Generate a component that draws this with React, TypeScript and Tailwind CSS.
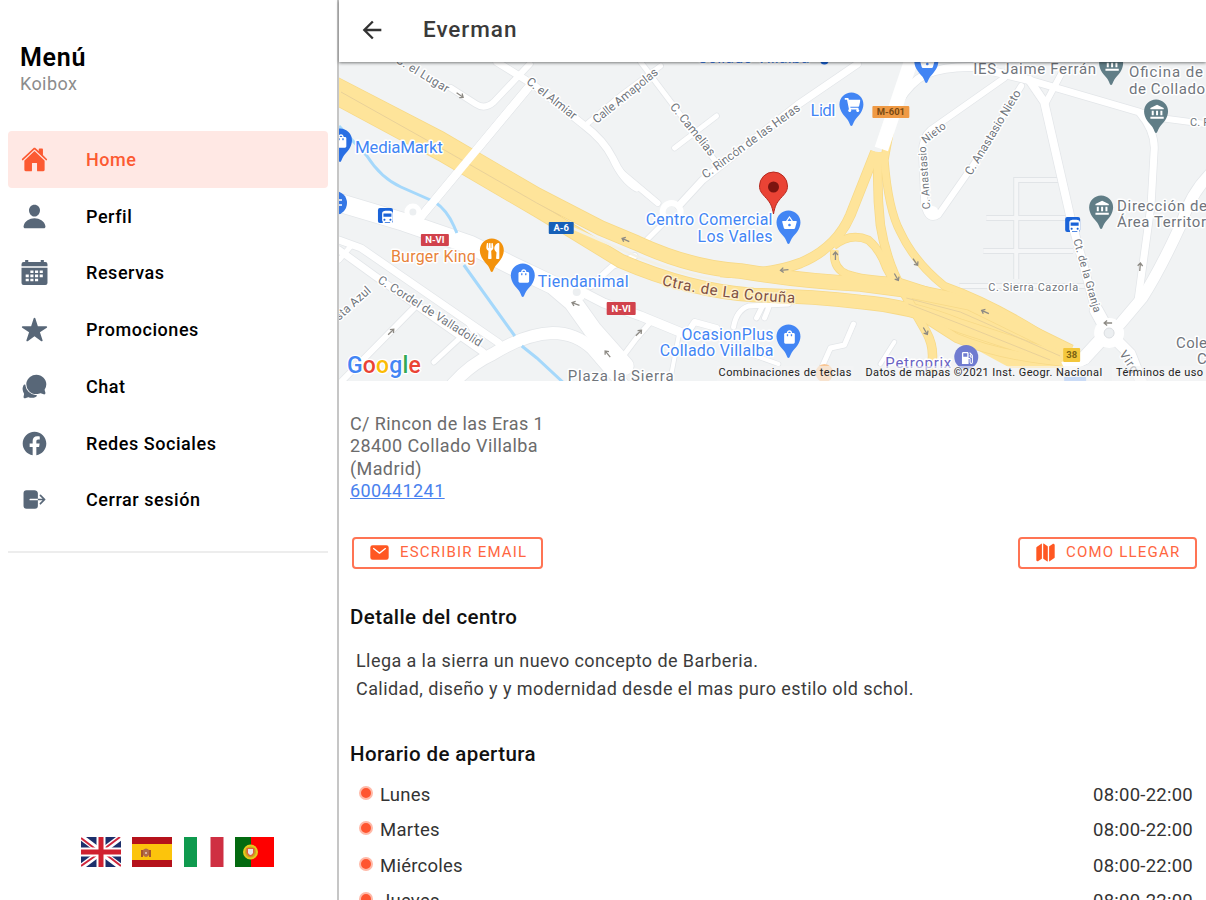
import type { ReactNode } from "react";
import type { IconType } from "react-icons";
import { FaShoppingCart, FaUtensils } from "react-icons/fa";
import {
  IoChatbubbles,
  IoHome,
  IoLogOut,
  IoLogoFacebook,
  IoMail,
  IoMap,
  IoPerson,
  IoStar,
} from "react-icons/io5";
import {
  MdAccountBalance,
  MdArrowBack,
  MdDirectionsBus,
  MdLocalGasStation,
  MdShoppingBag,
  MdShoppingBasket,
} from "react-icons/md";

function CalendarIcon({ className }: { className?: string }) {
  return (
    <svg viewBox="0 0 26 26" className={className} fill="currentColor">
      <path d="M4 1h3v2h12V1h3v2h1.500a2 2 0 0 1 2 2v2H.5V5a2 2 0 0 1 2-2H4z" />
      <path
        fillRule="evenodd"
        d="M.5 8.500h25V23a2 2 0 0 1-2 2h-21a2 2 0 0 1-2-2zM9 11v2.500h3V11zm4.500 0v2.500h3V11zm4.500 0v2.500h3V11zM4.500 15v2.500h3V15zM9 15v2.500h3V15zm4.500 0v2.500h3V15zm4.500 0v2.500h3V15zM4.500 19v2.500h3V19zM9 19v2.500h3V19zm4.500 0v2.500h3V19z"
      />
    </svg>
  );
}

const menu = [
  { label: "Home", icon: IoHome, active: true },
  { label: "Perfil", icon: IoPerson },
  { label: "Reservas", icon: CalendarIcon },
  { label: "Promociones", icon: IoStar },
  { label: "Chat", icon: IoChatbubbles },
  { label: "Redes Sociales", icon: IoLogoFacebook },
  { label: "Cerrar sesión", icon: IoLogOut },
];

const hours = [
  { day: "Lunes", time: "08:00-22:00" },
  { day: "Martes", time: "08:00-22:00" },
  { day: "Miércoles", time: "08:00-22:00" },
  { day: "Jueves", time: "08:00-22:00" },
];

function Flags() {
  return (
    <div className="flex gap-[11.300px] pl-[81px]">
      <svg viewBox="0 0 40 30" className="h-[30px] w-10">
        <path fill="#1c2f6b" d="M0 0h40v30H0z" />
        <path stroke="#fff" strokeWidth="6" d="M0 0l40 30M40 0L0 30" />
        <path stroke="#d0263c" strokeWidth="2" d="M0 1l17 13M40 29L23 16M39 0L23 12M0 29l17-12" />
        <path stroke="#fff" strokeWidth="9" d="M20 0v30M0 15h40" />
        <path stroke="#d0202f" strokeWidth="5" d="M20 0v30M0 15h40" />
      </svg>
      <svg viewBox="0 0 40 30" className="h-[30px] w-10">
        <path fill="#b5121b" d="M0 0h40v30H0z" />
        <path fill="#fcc40c" d="M0 7h40v16H0z" />
        <path fill="#a8552b" d="M9 13h2v7H9zM17 13h2v7h-2z" />
        <path fill="#b06a4a" d="M11 13q3-3 6 0v5q-3 4-6 0z" />
        <path fill="#d9b5a0" d="M13 15h2v2h-2z" />
      </svg>
      <svg viewBox="0 0 40 30" className="h-[30px] w-10">
        <path fill="#fff" d="M0 0h40v30H0z" />
        <path fill="#0f9a4e" d="M0 0h13v30H0z" />
        <path fill="#cf2f42" d="M26.500 0H39.500v30H26.500z" />
      </svg>
      <svg viewBox="0 0 40 30" className="h-[30px] w-10">
        <path fill="#fe0000" d="M0 0h39v30H0z" />
        <path fill="#046a10" d="M0 0h16v30H0z" />
        <circle cx="15.500" cy="15" r="6.500" fill="#c9a81c" stroke="#e6c81c" strokeWidth="2" />
        <path fill="#e0603a" d="M11.500 11h8v5q-4 7-8 0z" />
        <path fill="#e9e6ea" d="M13 12h5v4q-2.500 4-5 0z" />
      </svg>
    </div>
  );
}

function Sidebar() {
  return (
    <aside className="flex h-full w-[339px] shrink-0 flex-col border-r-[2.500px] border-[#c6c6c6] bg-white">
      <div className="h-[131px] pl-[20px] pt-[43px]">
        <h1 className="text-[25px] font-semibold leading-[30px] tracking-[0.7px] text-black">Menú</h1>
        <p className="text-[18px] leading-[22px] tracking-[0.4px] text-[#8c8c8c]">Koibox</p>
      </div>
      <nav className="ml-2 mr-[9px] h-[422px] border-b-2 border-[#ededed]">
        {menu.map(({ label, icon: Icon, active }) => (
          <div
            key={label}
            className={
              active
                ? "flex h-[56.750px] items-center rounded-[4px] bg-[#ffe8e4] text-[#fc5a32]"
                : "flex h-[56.750px] items-center text-black"
            }
          >
            <Icon
              className={
                active ? "ml-[13px] h-[27px] w-[27px]" : "ml-[13px] h-[27px] w-[27px] text-[#586778]"
              }
            />
            <span className="ml-[38px] text-[18px] font-medium tracking-[0.55px]">{label}</span>
          </div>
        ))}
      </nav>
      <div className="mt-auto pb-[33px]">
        <Flags />
      </div>
    </aside>
  );
}

type LabelProps = {
  x: number;
  y: number;
  w: number;
  r?: number;
  size?: number;
  fill?: string;
  halo?: number;
  children: ReactNode;
};

function Label({ x, y, w, r = 0, size = 12, fill = "#70757c", halo = 3, children }: LabelProps) {
  return (
    <text
      transform={`translate(${x} ${y}) rotate(${r})`}
      textLength={w}
      fontSize={size}
      fill={fill}
      stroke="#fff"
      strokeWidth={halo}
      strokeLinejoin="round"
      paintOrder="stroke"
    >
      {children}
    </text>
  );
}

// x / y is the tip of the pin
function Pin({ x, y, fill, icon: Icon }: { x: number; y: number; fill: string; icon: IconType }) {
  return (
    <g transform={`translate(${x} ${y})`}>
      <path
        fill={fill}
        d="M0 0C-1.500 0-1.500-3-4-6.500-7-10-12-15-12-21.500a12 12 0 0 1 24 0C12-15 7-10 4-6.500 1.500-3 1.500 0 0 0z"
      />
      <Icon x={-7} y={-29} width={14} height={14} color="#fff" />
    </g>
  );
}

type ShieldProps = {
  x: number;
  y: number;
  w: number;
  h: number;
  fill: string;
  color?: string;
  children: ReactNode;
};

function Shield({ x, y, w, h, fill, color = "#fff", children }: ShieldProps) {
  return (
    <g>
      <rect x={x} y={y} width={w} height={h} rx="1" fill={fill} />
      <text x={x + w / 2} y={y + h / 2 + 3.5} textAnchor="middle" fontSize="9.500" fontWeight="700" fill={color}>
        {children}
      </text>
    </g>
  );
}

function BusStop({ x, y }: { x: number; y: number }) {
  return (
    <g>
      <rect x={x} y={y} width="15" height="15" rx="2" fill="#1a63d8" />
      <MdDirectionsBus x={x + 1.5} y={y + 1.5} width={12} height={12} color="#fff" />
    </g>
  );
}

const streets = [
  { w: 8, d: "M528 87L419 218" },
  { w: 6, d: "M450 88L475 104Q484 110 493 102L529 64" },
  { w: 7, d: "M496 62L533 85L583 125Q603 140 612 158Q622 180 636 188" },
  { w: 6, d: "M620 172L657 203" },
  { w: 5, d: "M585 125L622 94L660 66" },
  { w: 5, d: "M640 62L714 160" },
  { w: 5, d: "M674 148L716 116" },
  { w: 7, d: "M678 206L702 180L797 105L857 64" },
  { w: 8, d: "M898 102Q910 82 926 74Q945 66 975 67L1029 80" },
  { w: 6, d: "M1004 78L930 130Q920 138 922 160L924 205Q928 222 938 215L973 165L1021 86" },
  { w: 8, d: "M1029 80L1044 102L1070 216L1096 312" },
  { w: 7, d: "M1029 80L1139 112Q1156 132 1154 152L1151 205L1138 300" },
  { w: 6, d: "M1061 74L1046 102" },
  { w: 6, d: "M1139 112L1160 118L1206 124" },
  { w: 11, d: "M1210 174Q1190 195 1182 222Q1160 270 1142 298L1120 324" },
  { w: 13, d: "M1096 310L1108 332L1084 358L1064 366" },
  { w: 11, d: "M1108 332L1130 354L1142 384" },
  { w: 7, d: "M338 240L360 248L498 343" },
  { w: 7, d: "M338 250L374 276L482 352" },
  { w: 6, d: "M413 308L338 384" },
  { w: 5, d: "M459 338L433 362" },
  { w: 5, d: "M468 324L478 340" },
  { w: 5, d: "M338 260L350 246" },
  { w: 18, d: "M336 202L403 222L470 245L512 266L552 285L572 302L592 330L624 366" },
  { w: 12, d: "M452 384Q470 364 492 354Q524 334 552 333Q575 333 592 349L622 384" },
  { w: 9, d: "M566 284L603 303L640 316L684 334" },
  { w: 6, d: "M590 286L612 266L634 256" },
  { w: 5, d: "M640 246L664 222" },
  { w: 5, d: "M615 366L636 338L650 322" },
  { w: 6, d: "M686 334L694 322L716 328" },
  { w: 4, d: "M678 336L670 378" },
  { w: 5, d: "M733 327Q736 310 748 306L788 304" },
  { w: 5, d: "M756 318L762 306M764 318L768 308" },
  { w: 5, d: "M853 324L844 345L830 348L822 366" },
  { w: 4, d: "M894 342L880 364" },
  { w: 4, d: "M738 350L778 364" },
];

const motorway = [
  { w: 14, d: "M330 82L440 139L536 195L600 228L636 243Q690 268 740 271Q800 281 860 284L906 290L970 303L1070 352" },
  { w: 13, d: "M330 95L440 154L536 210L566 228L620 261Q690 291 753 295Q810 296 860 302Q910 306 960 326L1070 362" },
  { w: 9, d: "M875 152L850 215Q836 248 800 263Q766 276 720 272" },
  { w: 8, d: "M878 152Q876 190 880 225Q886 262 902 290L926 332Q936 350 930 372" },
  { w: 7, d: "M891 122L884 160Q888 210 900 232Q914 262 944 286Q1000 306 1062 348" },
  { w: 7, d: "M833 246Q850 232 868 240Q880 250 886 268L896 286" },
  { w: 7, d: "M834 250Q832 268 846 274Q862 280 896 281L930 292" },
  { w: 8, d: "M906 306L956 338Q1000 356 1064 362" },
];

// Direction of traffic, rotation in degrees from pointing right
const arrows = [
  { x: 625, y: 240, r: 205 },
  { x: 784, y: 270, r: 175 },
  { x: 835, y: 256, r: -90 },
  { x: 896, y: 277, r: 60 },
  { x: 915, y: 262, r: 55 },
  { x: 985, y: 312, r: 205 },
  { x: 925, y: 331, r: 60 },
  { x: 1140, y: 267, r: -85 },
  { x: 1108, y: 323, r: 180 },
  { x: 390, y: 332, r: -45 },
  { x: 575, y: 304, r: 200 },
  { x: 607, y: 354, r: 230 },
  { x: 638, y: 333, r: -45 },
  { x: 459, y: 95, r: 35 },
];

function StreetMap() {
  return (
    <svg
      viewBox="338 62 868 319"
      preserveAspectRatio="none"
      className="block h-[319px] w-full shrink-0"
      fill="none"
    >
      <path fill="#f1f3f4" d="M338 62h868v319H338z" />

      {/* Unnamed blocks */}
      <g stroke="#e1e4e7" strokeWidth="6">
        <path d="M1061 180H1016V279M986 218h82M983 251h90M959 286h126" />
      </g>
      <g stroke="#f5f6f7" strokeWidth="4">
        <path d="M1061 180H1016V279M986 218h82M983 251h90M959 286h126" />
      </g>

      {/* Streets: casing first, then the surface */}
      <g strokeLinecap="round" strokeLinejoin="round">
        {streets.map((s) => (
          <path key={s.d} d={s.d} stroke="#e3e6e9" strokeWidth={s.w + 1.5} />
        ))}
        {streets.map((s) => (
          <path key={s.d} d={s.d} stroke="#fff" strokeWidth={s.w} />
        ))}
      </g>
      <circle cx="671" cy="212" r="9" stroke="#fff" strokeWidth="6" />
      <circle cx="576" cy="292" r="7" fill="#eceff1" stroke="#fff" strokeWidth="6" />
      <circle cx="412" cy="212" r="6" fill="#eceff1" stroke="#fff" strokeWidth="5" />
      <circle cx="932" cy="212" r="6" fill="#fff" />
      <circle cx="1109" cy="333" r="15" fill="#fff" />
      <circle cx="1109" cy="333" r="5" fill="#eceff1" stroke="#dadde0" />

      <path
        stroke="#a5d8fb"
        strokeWidth="3"
        d="M338 126L366 156Q380 178 400 187L434 202Q446 210 453 226L456 233M463 265L514 336M521 346L536 358L562 382"
      />

      {/* Motorway and its ramps */}
      <path fill="#fee49a" d="M938 289L1000 308L1062 342V368H1010L940 330L906 308V290z" />
      <g strokeLinejoin="round">
        {motorway.map((s) => (
          <path key={s.d} d={s.d} stroke="#f7d987" strokeWidth={s.w + 1.5} />
        ))}
        {motorway.map((s) => (
          <path key={s.d} d={s.d} stroke="#fee49a" strokeWidth={s.w} />
        ))}
      </g>
      <path
        stroke="#e9d199"
        strokeWidth="1"
        d="M340 92L440 148L536 203L560 216M906 298L960 312L1060 356M908 304L960 324L1050 360"
      />
      <path stroke="#f3f1e6" strokeWidth="2.500" d="M567 226L640 258Q680 274 720 281" />
      <path stroke="#fff" strokeWidth="14" d="M911 60L881 149" />
      <path stroke="#fff" strokeWidth="8" d="M528 87L419 218" />
      <path stroke="#fff" strokeWidth="13" d="M1064 368L1086 357" />

      {arrows.map(({ x, y, r }) => (
        <path
          key={`${x}-${y}`}
          transform={`translate(${x} ${y}) rotate(${r})`}
          stroke="#8d8a84"
          strokeWidth="1.300"
          d="M-4 0H4M1-2.500L4 0 1 2.500"
        />
      ))}

      <Label x={394} y={62} w={60} r={31}>C. el Lugar</Label>
      <Label x={525} y={83} w={60} r={38}>C. el Almiar</Label>
      <Label x={596} y={124} w={80} r={-39}>Calle Amapolas</Label>
      <Label x={669} y={107} w={64} r={51}>C. Camelias</Label>
      <Label x={705} y={179} w={118} r={-36}>C. Rincón de las Heras</Label>
      <Label x={930} y={209} w={63} r={-94} size={11}>C. Anastasio</Label>
      <Label x={925} y={144} w={27} r={-38} size={11}>Nieto</Label>
      <Label x={971} y={176} w={97} r={-59}>C. Anastasio Nieto</Label>
      <Label x={376} y={282} w={121} r={32.5}>C. Cordel de Valladolid</Label>
      <Label x={338} y={321} w={44} r={-42}>sta Azul</Label>
      <Label x={1073} y={240} w={76} r={74} size={11}>Ct. de la Granja</Label>
      <Label x={988} y={291} w={90} size={11}>C. Sierra Cazorla</Label>
      <Label x={1190} y={126} w={20} size={11}>C. R</Label>
      <Label x={1119} y={354} w={24} r={56} size={12}>Virg</Label>

      <path id="ctra" d="M661 285Q722 300 798 303" />
      <text fontSize="15" fill="#7d4e42" stroke="#fdf0cb" strokeWidth="3" paintOrder="stroke">
        <textPath href="#ctra" textLength="135">Ctra. de La Coruña</textPath>
      </text>

      <Shield x={548} y={222} w={25} h={12} fill="#1660b8">A-6</Shield>
      <Shield x={420} y={234} w={28} h={12} fill="#d1424c">N-VI</Shield>
      <Shield x={606} y={302} w={29} h={13} fill="#d1424c">N-VI</Shield>
      <Shield x={872} y={106} w={37} h={12} fill="#ef9a45" color="#7a4a12">M-601</Shield>
      <Shield x={1063} y={348} w={17} h={14} fill="#f3c73c" color="#7a6212">38</Shield>
      <BusStop x={377} y={208} />
      <BusStop x={1065} y={217} />

      <Label x={697} y={63} w={112} size={16} fill="#4285f4">Collado Villalba</Label>
      <circle cx="824" cy="60" r="4.500" fill="#1a63d8" />
      <Label x={354} y={153} w={88} size={17} fill="#4285f4">MediaMarkt</Label>
      <Label x={810} y={116} w={25} size={17} fill="#4285f4">Lidl</Label>
      <Label x={645} y={225} w={127} size={16} fill="#4285f4">Centro Comercial</Label>
      <Label x={697} y={242} w={75} size={16} fill="#4285f4">Los Valles</Label>
      <Label x={537} y={287} w={91} size={16} fill="#4285f4">Tiendanimal</Label>
      <Label x={681} y={340} w={92} size={16} fill="#4285f4">OcasionPlus</Label>
      <Label x={659} y={356} w={114} size={16} fill="#4285f4">Collado Villalba</Label>
      <Label x={390} y={262} w={85} size={16} fill="#e8833a">Burger King</Label>
      <Label x={885} y={368} w={66} size={15} fill="#6a63c4">Petroprix</Label>
      <Label x={973} y={74} w={123} size={15}>IES Jaime Ferrán</Label>
      <Label x={1129} y={77} w={74} size={15}>Oficina de</Label>
      <Label x={1129} y={94} w={76} size={15}>de Collado</Label>
      <Label x={1117} y={211} w={90} size={15}>Dirección de</Label>
      <Label x={1117} y={227} w={89} size={15}>Área Territor</Label>
      <Label x={1176} y={348} w={31} size={15}>Cole</Label>
      <Label x={1197} y={364} w={11} size={15}>C</Label>
      <Label x={567} y={381} w={106} size={15}>Plaza la Sierra</Label>

      <Pin x={851} y={126} fill="#4285f4" icon={FaShoppingCart} />
      <Pin x={788} y={244} fill="#4285f4" icon={MdShoppingBasket} />
      <Pin x={522} y={297} fill="#4285f4" icon={MdShoppingBag} />
      <Pin x={788} y={358} fill="#4285f4" icon={MdShoppingBag} />
      <Pin x={926} y={83} fill="#4285f4" icon={MdShoppingBasket} />
      <Pin x={339} y={162} fill="#2a6fe3" icon={MdShoppingBag} />
      <circle cx="334" cy="203" r="12" fill="#3577e5" />
      <path stroke="#fff" strokeWidth="1.500" d="M338 200h3M338 205h3" />
      <Pin x={491} y={272} fill="#f3920b" icon={FaUtensils} />
      <Pin x={1111} y={85} fill="#607d86" icon={MdAccountBalance} />
      <Pin x={1156} y={133} fill="#607d86" icon={MdAccountBalance} />
      <Pin x={1101} y={229} fill="#607d86" icon={MdAccountBalance} />
      <circle cx="966" cy="357" r="12" fill="#6f7bd0" />
      <MdLocalGasStation x={959} y={350} width={14} height={14} color="#fff" />
      <circle cx="824" cy="373" r="9" fill="#f9c796" />
      <path fill="#8ab4f8" d="M1064 377h22v4h-22z" />

      {/* Selected place */}
      <path
        fill="#ea4335"
        stroke="#b5291f"
        strokeWidth="1"
        d="M773 214C771.500 206 770 203 766 198.500 761 193 759 191 759 186a14 14 0 0 1 28 0c0 5-2 7-7 12.500-4 4.500-5.500 7.500-7 15.500z"
      />
      <circle cx="773" cy="187" r="5.500" fill="#7c1410" />

      <path
        fill="#f5f5f5"
        fillOpacity="0.6"
        d="M716 366h137v15H716zM861 366h243v15H861zM1112 366h94v15h-94z"
      />
      <g fill="#222" fontSize="11">
        <text x="718" y="376.500" textLength="133">Combinaciones de teclas</text>
        <text x="865" y="376.500" textLength="237">Datos de mapas ©2021 Inst. Geogr. Nacional</text>
        <text x="1116" y="376.500" textLength="87">Términos de uso</text>
      </g>

      <text
        x="346"
        y="373"
        textLength="74"
        fontSize="23"
        fontWeight="500"
        stroke="#fff"
        strokeWidth="2.500"
        paintOrder="stroke"
      >
        <tspan fill="#4285f4">G</tspan>
        <tspan fill="#ea4335">o</tspan>
        <tspan fill="#fbbc04">o</tspan>
        <tspan fill="#4285f4">g</tspan>
        <tspan fill="#34a853">l</tspan>
        <tspan fill="#ea4335">e</tspan>
      </text>
    </svg>
  );
}

export default function App() {
  return (
    <div className="flex h-[900px] w-[1206px] overflow-hidden bg-white font-['Roboto',sans-serif]">
      <Sidebar />

      <main className="flex min-w-0 flex-1 flex-col">
        <header className="relative flex h-[62px] shrink-0 items-center bg-white pb-[3px] shadow-[0_1px_3px_rgba(0,0,0,0.5)]">
          <MdArrowBack className="ml-[19px] h-[28px] w-[28px] text-[#333]" />
          <h2 className="ml-[37px] text-[22.500px] font-medium tracking-[0.95px] text-[#3a3a3a]">Everman</h2>
        </header>

        <StreetMap />

        {/* Address */}
        <address className="ml-[11px] mt-[32px] text-[18px] not-italic leading-[22.400px] tracking-[0.4px] text-[#6c6c6c]">
          <p>C/ Rincon de las Eras 1</p>
          <p>28400 Collado Villalba</p>
          <p>(Madrid)</p>
          <a className="text-[#4a82ee] underline">600441241</a>
        </address>

        <div className="mt-[34px] flex justify-between pl-[13px] pr-[9px]">
          <button className="flex h-[32px] w-[191px] items-center whitespace-nowrap rounded-[4px] border-2 border-[#ff7454] pl-[15px] text-[15px] tracking-[1.2px] text-[#ff6640]">
            <IoMail className="mr-[10px] h-[21px] w-[21px] text-[#ff5722]" />
            ESCRIBIR EMAIL
          </button>
          <button className="flex h-[32px] w-[179px] items-center whitespace-nowrap rounded-[4px] border-2 border-[#ff7454] pl-[15px] text-[15px] tracking-[1.2px] text-[#ff6640]">
            <IoMap className="mr-[10px] h-[21px] w-[21px] text-[#ff5722]" />
            COMO LLEGAR
          </button>
        </div>

        <h3 className="ml-[11px] mt-[34px] text-[20.500px] font-medium leading-[28px] tracking-[0.4px] text-[#111]">
          Detalle del centro
        </h3>
        <div className="ml-[17px] mt-[16px] text-[18px] leading-[28px] tracking-[0.420px] text-[#3c3c3c]">
          <p>Llega a la sierra un nuevo concepto de Barberia.</p>
          <p>Calidad, diseño y y modernidad desde el mas puro estilo old schol.</p>
        </div>

        <h3 className="ml-[11px] mt-[37px] text-[20.500px] font-medium leading-[28px] tracking-[0.4px] text-[#111]">
          Horario de apertura
        </h3>
        <ul className="mt-[10px]">
          {hours.map(({ day, time }) => (
            <li
              key={day}
              className="flex h-[35.500px] items-center pl-[20px] pr-[13px] text-[18.500px] tracking-[0.250px] text-[#333]"
            >
              <span className="mb-[5px] mr-[7px] h-[14px] w-[14px] rounded-full border-2 border-[#ffb9a8] bg-[#ff5530]" />
              <span className="flex-1">{day}</span>
              <span>{time}</span>
            </li>
          ))}
        </ul>
      </main>
    </div>
  );
}
